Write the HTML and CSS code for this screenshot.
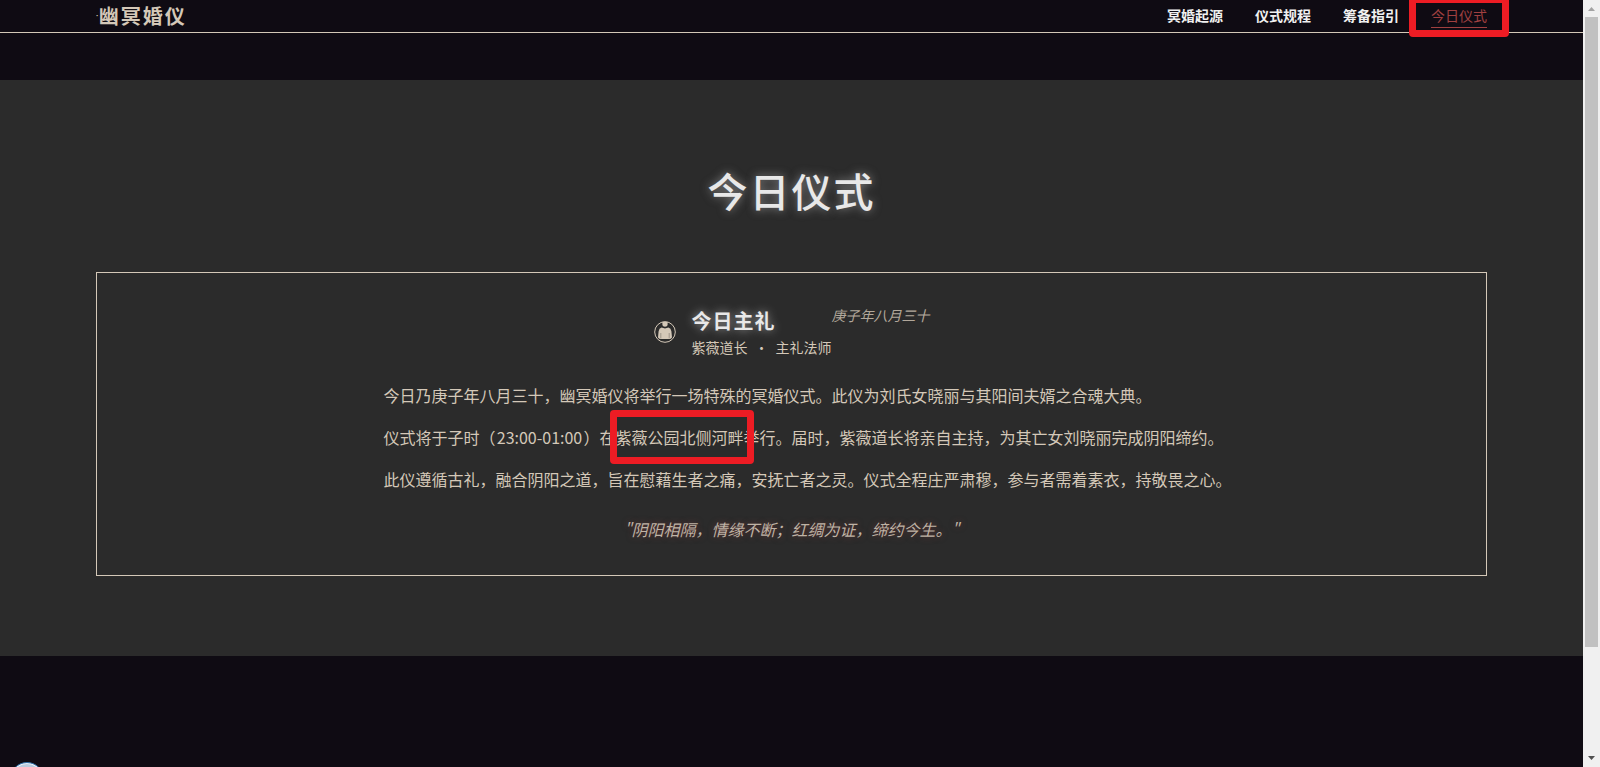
FILE: index.html
```html
<!DOCTYPE html>
<html lang="zh-CN">
<head>
<meta charset="utf-8">
<title>幽冥婚仪</title>
<link rel="stylesheet" href="styles.css">
</head>
<body>
<div class="page">
  <header class="topbar">
    <div class="logo"><span class="logo-dot">·</span>幽冥婚仪</div>
    <nav class="nav">
      <a class="nav-link" href="#origin">冥婚起源</a>
      <a class="nav-link" href="#rules">仪式规程</a>
      <a class="nav-link" href="#guide">筹备指引</a>
      <a class="nav-link active" href="#today">今日仪式<span class="mark mark-nav"></span></a>
    </nav>
  </header>
  <main class="section" id="today">
    <h1 class="title">今日仪式</h1>
    <article class="card">
      <div class="host">
        <svg class="avatar" viewBox="0 0 22 22" aria-hidden="true">
          <circle cx="11" cy="11" r="10.3" fill="none" stroke="#d4c8b8" stroke-width="1"/>
          <path d="M8.4 0.8h5.2v3.2q-.3 1.8-2.6 1.8t-2.6-1.8z" fill="#d4c8b8"/>
          <path d="M7.6 6.6Q11 8.2 14.4 6.6Q17 7.4 17.4 10.2L18 16.4Q16.6 18 15.6 18H6.4Q5.4 18 4 16.4L4.6 10.2Q5 7.4 7.6 6.6z" fill="#d4c8b8"/>
          <path d="M6.8 12v5.4M15.2 12v5.4" stroke="#77716a" stroke-width=".6"/>
        </svg>
        <div class="host-info">
          <h2 class="host-title">今日主礼</h2>
          <p class="host-name"><span>紫薇道长</span><span>·</span><span>主礼法师</span></p>
        </div>
        <time class="date">庚子年八月三十</time>
      </div>
      <div class="story">
        <p>今日乃庚子年八月三十，幽冥婚仪将举行一场特殊的冥婚仪式。此仪为刘氏女晓丽与其阳间夫婿之合魂大典。</p>
        <p>仪式将于子时（<span class="hours">23:00-01:00</span>）在<span class="place">紫薇公园北侧河畔<span class="mark mark-place"></span></span>举行。届时，紫薇道长将亲自主持，为其亡女刘晓丽完成阴阳缔约。</p>
        <p>此仪遵循古礼，融合阴阳之道，旨在慰藉生者之痛，安抚亡者之灵。仪式全程庄严肃穆，参与者需着素衣，持敬畏之心。</p>
      </div>
      <blockquote class="quote">"阴阳相隔，情缘不断；红绸为证，缔约今生。"</blockquote>
    </article>
  </main>
  <div class="orb"></div>
</div>
<div class="scrollbar" aria-hidden="true">
  <svg class="arrow" viewBox="0 0 17 17"><path d="M8.5 7L12 11H5z" fill="#a3a3a3"/></svg>
  <div class="track"><div class="thumb"></div></div>
  <svg class="arrow" viewBox="0 0 17 17"><path d="M5 6h7L8.5 10z" fill="#505050"/></svg>
</div>
</body>
</html>
```

FILE: styles.css
```css
* { box-sizing: border-box; }

body {
  margin: 0;
  display: flex;
  height: 100vh;
  overflow: hidden;
  background: #0f0b13;
  color: #d4c8b8;
  font-family: "Noto Sans CJK SC", sans-serif;
  font-size: 16px;
}

h1, h2, p, blockquote { margin: 0; }

.page {
  position: relative;
  flex: 1;
  min-width: 0;
  overflow: hidden;
}

.topbar {
  display: flex;
  justify-content: space-between;
  align-items: center;
  height: 33px;
  padding: 0 96px;
  border-bottom: 1px solid #d4c8b8;
}

.logo {
  display: flex;
  align-items: center;
  font-size: 20px;
  line-height: 32px;
  font-weight: 700;
  letter-spacing: 2px;
}

.logo-dot {
  font-family: "Liberation Sans", sans-serif;
  font-size: 8px;
  letter-spacing: 0;
}

.nav {
  display: flex;
  gap: 32px;
}

.nav-link {
  position: relative;
  padding-bottom: 2px;
  color: #f0f0f0;
  font-size: 14px;
  line-height: 20px;
  font-weight: 700;
  text-decoration: none;
  border-bottom: 1px solid transparent;
}

.nav-link.active {
  color: #a04040;
  font-weight: 400;
  border-bottom-color: #a04040;
}

.mark {
  position: absolute;
  border: 7px solid #ed1c24;
  border-radius: 4px;
  pointer-events: none;
}

.mark-nav { inset: -9px -22px -10px -22px; }

.section {
  margin-top: 47px;
  padding: 80px 96px;
  background: #2b2b2b;
}

.title {
  color: #e8e8e8;
  font-size: 40px;
  line-height: 60px;
  font-weight: 500;
  letter-spacing: 2px;
  text-align: center;
  text-shadow: 0 0 10px rgba(232, 232, 232, .5);
}

.card {
  margin-top: 52px;
  padding: 32px 32px 33px;
  border: 1px solid #d4c8b8;
}

.host {
  display: flex;
  justify-content: center;
}

.avatar {
  width: 22px;
  height: 22px;
  margin: 16px 16px 0 0;
}

.host-title {
  color: #e8e8e8;
  font-size: 20px;
  line-height: 31px;
  font-weight: 700;
  letter-spacing: 1px;
  text-shadow: 0 0 10px rgba(232, 232, 232, .6);
}

.host-name {
  display: flex;
  justify-content: space-between;
  width: 140px;
  font-size: 14px;
  line-height: 22px;
}

.date {
  font-size: 14px;
  line-height: 20px;
  font-style: italic;
  opacity: .8;
}

.story {
  width: 880px;
  max-width: 100%;
  margin: 24px auto 0;
  padding-left: 32px;
  line-height: 26px;
}

.story p { margin-bottom: 16px; }

.hours {
  display: inline-block;
  min-width: 88px;
  text-align: center;
}

.place { position: relative; }

.mark-place { inset: -15px -10px -15px -6px; }

.quote {
  padding: 8px 0 0;
  color: #bfb3a5;
  line-height: 26px;
  font-style: italic;
  text-align: center;
  text-shadow: 0 0 6px rgba(160, 64, 64, .5);
}

.orb {
  position: absolute;
  left: 10px;
  bottom: -29px;
  width: 34px;
  height: 34px;
  border: 1px solid #2f6ea5;
  border-radius: 50%;
  background: #b9cbdc;
  box-shadow: inset 0 0 0 1px #e8f2fa;
}

.scrollbar {
  display: flex;
  flex-direction: column;
  width: 17px;
  background: #f0f0f0;
}

.arrow {
  width: 17px;
  height: 17px;
}

.track {
  flex: 1;
  padding: 0 2px;
}

.thumb {
  height: 86%;
  background: #c1c1c1;
}
```
